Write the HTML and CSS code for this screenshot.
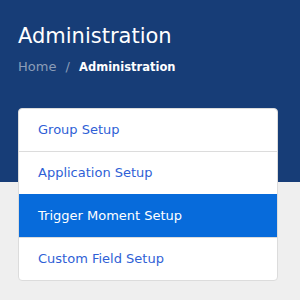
FILE: index.html
```html
<!DOCTYPE html>
<html lang="en">
<head>
    <meta charset="UTF-8">
    <meta name="viewport" content="width=device-width, initial-scale=1.0">
    <title>Administration</title>
    <link rel="stylesheet" href="styles.css">
</head>
<body>
    <div class="page-header">
        <h1>Administration</h1>
        <div class="breadcrumb">
            <a href="#">Home</a>
            <span class="sep">/</span>
            <span class="current">Administration</span>
        </div>
    </div>
    <div class="content">
        <div class="menu">
            <a href="#" class="menu-item">Group Setup</a>
            <a href="#" class="menu-item">Application Setup</a>
            <a href="#" class="menu-item active">Trigger Moment Setup</a>
            <a href="#" class="menu-item">Custom Field Setup</a>
        </div>
    </div>
</body>
</html>
```

FILE: styles.css
```css
body {
    font-family: "DejaVu Sans", sans-serif;
    margin: 0;
    padding: 0;
    background-color: #efefef;
    min-height: 100vh;
}
.page-header {
    background-color: #173d77;
    height: 182px;
    padding: 23px 18px 0;
    box-sizing: border-box;
}
h1 {
    margin: 0;
    font-size: 21px;
    font-weight: normal;
    color: #fff;
    line-height: 26px;
}
.breadcrumb {
    margin-top: 10px;
    font-size: 13px;
    line-height: 16px;
    color: #8c9db8;
}
.breadcrumb a {
    color: #8c9db8;
    text-decoration: none;
}
.breadcrumb .sep {
    margin: 0 5px;
}
.breadcrumb .current {
    color: #fff;
    font-weight: bold;
    font-size: 11.5px;
}
.content {
    margin-top: -74px;
    padding: 0 22px 0 18px;
}
.menu {
    background-color: #fff;
    border: 1px solid #dcdcdc;
    border-radius: 4px;
    overflow: hidden;
    display: flex;
    flex-direction: column;
}
.menu-item {
    display: block;
    padding: 0 19px;
    height: 42px;
    line-height: 42px;
    font-size: 13px;
    color: #2f5fd6;
    text-decoration: none;
    border-top: 1px solid #dcdcdc;
}
.menu-item:first-child {
    border-top: none;
}
.menu-item.active {
    background-color: #076bdb;
    color: #fff;
    border-top-color: #076bdb;
}
```
